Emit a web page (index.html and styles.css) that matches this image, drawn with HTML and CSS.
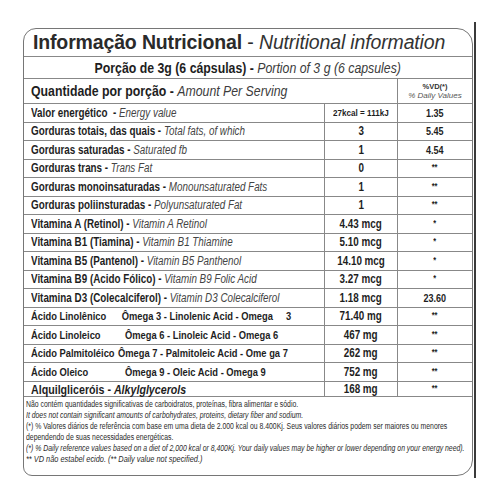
FILE: index.html
```html
<!DOCTYPE html>
<html>
<head>
<meta charset="utf-8">
<link rel="stylesheet" href="styles.css">
</head>
<body>
<div class="page">
  <div class="panel">
    <div class="title"><b>Informação Nutricional</b> - <i>Nutritional information</i></div>
    <div class="portion"><span class="n c"><b>Porção de 3g (6 cápsulas) -</b> <i>Portion of 3 g (6 capsules)</i></span></div>
    <div class="head">
      <div class="hname"><span class="n"><b>Quantidade por porção -</b> <i>Amount Per Serving</i></span></div>
      <div class="vd"><b>%VD(*)</b><i>% Daily Values</i></div>
    </div>
    <div class="row"><div class="name"><span class="n"><b>Valor energético</b>&nbsp; <b>-</b> <i>Energy value</i></span></div><div class="amt kcal"><span class="n c">27kcal = 111kJ</span></div><div class="pct"><span class="n c">1.35</span></div></div>
    <div class="row"><div class="name"><span class="n"><b>Gorduras totais, das quais -</b> <i>Total fats, of which</i></span></div><div class="amt"><span class="n c">3</span></div><div class="pct"><span class="n c">5.45</span></div></div>
    <div class="row"><div class="name"><span class="n"><b>Gorduras saturadas -</b> <i>Saturated fb</i></span></div><div class="amt"><span class="n c">1</span></div><div class="pct"><span class="n c">4.54</span></div></div>
    <div class="row"><div class="name"><span class="n"><b>Gorduras trans -</b> <i>Trans Fat</i></span></div><div class="amt"><span class="n c">0</span></div><div class="pct star"><span class="n c">**</span></div></div>
    <div class="row"><div class="name"><span class="n"><b>Gorduras monoinsaturadas -</b> <i>Monounsaturated Fats</i></span></div><div class="amt"><span class="n c">1</span></div><div class="pct star"><span class="n c">**</span></div></div>
    <div class="row"><div class="name"><span class="n"><b>Gorduras poliinsturadas -</b> <i>Polyunsaturated Fat</i></span></div><div class="amt"><span class="n c">1</span></div><div class="pct star"><span class="n c">**</span></div></div>
    <div class="row"><div class="name"><span class="n"><b>Vitamina A (Retinol) -</b> <i>Vitamin A Retinol</i></span></div><div class="amt"><span class="n c">4.43 mcg</span></div><div class="pct star"><span class="n c">*</span></div></div>
    <div class="row"><div class="name"><span class="n"><b>Vitamina B1 (Tiamina) -</b> <i>Vitamin B1 Thiamine</i></span></div><div class="amt"><span class="n c">5.10 mcg</span></div><div class="pct star"><span class="n c">*</span></div></div>
    <div class="row"><div class="name"><span class="n"><b>Vitamina B5 (Pantenol) -</b> <i>Vitamin B5 Panthenol</i></span></div><div class="amt"><span class="n c">14.10 mcg</span></div><div class="pct star"><span class="n c">*</span></div></div>
    <div class="row"><div class="name"><span class="n"><b>Vitamina B9 (Acido Fólico) -</b> <i>Vitamin B9 Folic Acid</i></span></div><div class="amt"><span class="n c">3.27 mcg</span></div><div class="pct star"><span class="n c">*</span></div></div>
    <div class="row"><div class="name"><span class="n"><b>Vitamina D3 (Colecalciferol) -</b> <i>Vitamin D3 Colecalciferol</i></span></div><div class="amt"><span class="n c">1.18 mcg</span></div><div class="pct"><span class="n c">23.60</span></div></div>
    <div class="row omega"><div class="name"><span class="n"><span class="lead w3">Ácido Linolênico</span>Ômega 3 - Linolenic Acid - Omega<span class="gap"></span>3</span></div><div class="amt"><span class="n c">71.40 mg</span></div><div class="pct star"><span class="n c">**</span></div></div>
    <div class="row omega"><div class="name"><span class="n"><span class="lead w6">Ácido Linoleico</span>Ômega 6 - Linoleic Acid - Omega 6</span></div><div class="amt"><span class="n c">467 mg</span></div><div class="pct star"><span class="n c">**</span></div></div>
    <div class="row omega"><div class="name"><span class="n"><span class="lead w7">Ácido Palmitoléico</span>Ômega 7 - Palmitoleic Acid - Ome ga 7</span></div><div class="amt"><span class="n c">262 mg</span></div><div class="pct star"><span class="n c">**</span></div></div>
    <div class="row omega"><div class="name"><span class="n"><span class="lead w9">Ácido Oleico</span>Ômega 9 - Oleic Acid - Omega 9</span></div><div class="amt"><span class="n c">752 mg</span></div><div class="pct star"><span class="n c">**</span></div></div>
    <div class="row last"><div class="name alq"><span class="n"><b>Alquilgliceróis - <i>Alkylglycerols</i></b></span></div><div class="amt"><span class="n c">168 mg</span></div><div class="pct star"><span class="n c">**</span></div></div>
    <div class="notes">
      <div><span class="n">Não contém quantidades significativas de carboidratos, proteínas, fibra alimentar e sódio.</span></div>
      <div class="it"><span class="n">It does not contain significant amounts of carbohydrates, proteins, dietary fiber and sodium.</span></div>
      <div><span class="n">(*) % Valores diários de referência com base em uma dieta de 2.000 kcal ou 8.400Kj. Seus valores diários podem ser maiores ou menores</span></div>
      <div><span class="n">dependendo de suas necessidades energéticas.</span></div>
      <div class="it"><span class="n">(*) % Daily reference values based on a diet of 2,000 kcal or 8,400Kj. Your daily values may be higher or lower depending on your energy need).</span></div>
      <div class="it vdn"><span class="n">** VD não estabel ecido. (** Daily value not specified.)</span></div>
    </div>
  </div>
  <div class="rule"></div>
</div>
</body>
</html>
```
FILE: styles.css
```css
* { box-sizing: border-box; }
body {
  margin: 0;
  background: #fff;
  color: #1e1e1e;
  font-family: "Liberation Sans", Arial, sans-serif;
}
.page {
  display: flex;
  align-items: flex-start;
  padding: 22px 0 0 23px;
}
.panel {
  width: 450px;
  margin-top: 6px;
  border: 1px solid #767676;
  border-radius: 13px 16px 16px 9px;
  overflow: hidden;
}
.rule {
  width: 2px;
  height: 456px;
  margin-left: 1px;
  background: #3a3a3a;
}
i { font-weight: normal; color: #3b3b3b; }
b { font-weight: bold; }

/* condensed text (Arial Narrow look) */
.n {
  display: inline-block;
  white-space: nowrap;
  transform: scaleX(0.82);
  transform-origin: left center;
}
.n.c { transform-origin: center center; }

.title {
  height: 28px;
  border-bottom: 1px solid #888;
  font-size: 19.5px;
  letter-spacing: -0.15px;
  line-height: 27px;
  padding-left: 9px;
  color: #2a2a2a;
  white-space: nowrap;
}
.title i { color: #333; }
.portion {
  height: 22px;
  border-bottom: 1px solid #888;
  display: flex;
  justify-content: center;
  align-items: center;
  font-size: 15px;
  padding-bottom: 1px;
}
.head {
  display: grid;
  grid-template-columns: 373px 75px;
  height: 25px;
  border-bottom: 1px solid #888;
}
.hname {
  font-size: 15px;
  display: flex;
  align-items: center;
  padding-left: 7px;
  padding-bottom: 1px;
}
.vd {
  border-left: 1px solid #888;
  display: flex;
  flex-direction: column;
  align-items: center;
  justify-content: center;
  font-size: 8px;
  line-height: 9px;
  padding-bottom: 1px;
}
.vd b { color: #333; font-size: 7.5px; }
.vd i { color: #555; }
.row {
  display: grid;
  grid-template-columns: 300px 73px 75px;
  height: 18.53px;
  border-bottom: 1px solid #888;
  font-size: 12px;
}
.row.last { height: 15.5px; }
.name {
  padding-left: 7px;
  display: flex;
  align-items: center;
}
.name i { color: #444; }
.amt, .pct {
  border-left: 1px solid #888;
  display: flex;
  align-items: center;
  justify-content: center;
  font-weight: bold;
  font-size: 12px;
}
.pct { font-size: 11px; }
.amt.kcal { font-size: 9.9px; }
.pct.star { font-size: 9px; padding-bottom: 2px; }
.omega .name {
  font-weight: bold;
  font-size: 11.4px;
}
.lead { display: inline-block; }
.w3 { width: 110.6px; }
.w6 { width: 114.6px; }
.w7 { width: 106px; }
.w9 { width: 114.6px; }
.gap { display: inline-block; width: 16px; }
.name.alq { font-size: 13px; }
.name.alq i { font-weight: bold; font-style: italic; color: #1e1e1e; }
.notes {
  padding: 2px 0 10px 2px;
  font-size: 8.4px;
  line-height: 11px;
  color: #2a2a2a;
}
.notes div { height: 11px; white-space: nowrap; }
.notes .it { font-style: italic; }
.notes .vdn { font-size: 9px; }
```
